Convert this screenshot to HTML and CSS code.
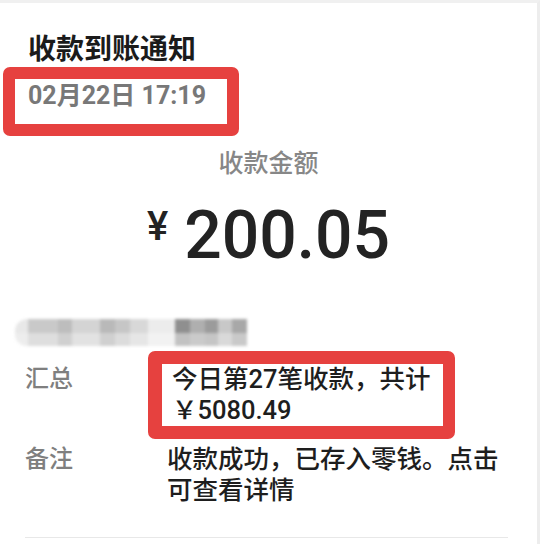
FILE: index.html
```html
<!DOCTYPE html>
<html lang="zh-CN">
<head>
    <meta charset="UTF-8">
    <meta name="viewport" content="width=device-width, initial-scale=1.0">
    <title>收款到账通知</title>
    <link rel="stylesheet" href="styles.css">
</head>
<body>

<div class="screen">
    <h1 class="title">收款到账通知</h1>
    <div class="mark date-box">02月22日 17:19</div>

    <div class="amount-label">收款金额</div>
    <div class="amount">
        <span class="currency">¥</span>
        <span class="value">200.05</span>
    </div>

    <!-- mosaic over the payer name -->
    <div class="mosaic">
        <div class="mosaic-top"></div>
        <div class="mosaic-bottom"></div>
    </div>

    <div class="details">
        <div class="label first">汇总</div>
        <div class="mark total-box">今日第27笔收款，共计<br>￥5080.49</div>

        <div class="label">备注</div>
        <div class="note">收款成功，已存入零钱。点击可查看详情</div>
    </div>
</div>

</body>
</html>
```

FILE: styles.css
```css
body {
    margin: 0;
    background: #fff;
    font-family: Roboto, "Noto Sans CJK SC", sans-serif;
    color: #1e1e1e;
}

.screen {
    width: 540px;
    height: 544px;
    box-sizing: border-box;
    border-top: 3px solid #f0f0f0;
    border-right: 3px solid #ededed;
    padding-top: 30px;
    overflow: hidden;
}

.title {
    margin: 0 0 0 28px;
    font-size: 28px;
    line-height: 34px;
    font-weight: 700;
    color: #1b1b1b;
}

.mark {
    border: 13px solid #e6413f;
    border-radius: 7px;
}

.date-box {
    width: 236px;
    box-sizing: border-box;
    margin-left: 3px;
    border-width: 12px;
    padding: 0 8px 12px 13px;
    font-size: 25px;
    line-height: 33px;
    font-weight: 700;
    color: #787878;
}

.amount-label {
    margin-top: 13px;
    text-align: center;
    font-size: 25px;
    line-height: 30px;
    font-weight: 500;
    color: #878787;
}

.amount {
    display: flex;
    justify-content: center;
    gap: 16px;
    margin-top: 24px;
    color: #232323;
    font-weight: 500;
}

.currency {
    margin-top: 4px;
    font-size: 40px;
    line-height: 40px;
}

.value {
    font-size: 66px;
    line-height: 66px;
}

.mosaic {
    width: 232px;
    margin: 50px 0 0 15px;
    border-radius: 12px 0 0 12px;
    overflow: hidden;
    filter: blur(1.5px);
}

.mosaic-top,
.mosaic-bottom {
    height: 14px;
}

.mosaic-top {
    background: linear-gradient(to right,
        #e8e8e8 0 13px, #c9c9c9 13px 43px, #bdbdbd 43px 57px,
        #d4d4d4 57px 85px, #b9b9b9 85px 100px, #c6c6c6 100px 115px,
        #d8d8d8 115px 133px, #ececec 133px 160px, #8f8f8f 160px 175px,
        #afafaf 175px 190px, #9b9b9b 190px 203px, #c8c8c8 203px 217px,
        #a8a8a8 217px 232px);
}

.mosaic-bottom {
    height: 13px;
    background: linear-gradient(to right,
        #ededed 0 13px, #dedede 13px 43px, #d0d0d0 43px 57px,
        #e2e2e2 57px 85px, #d0d0d0 85px 100px, #dcdcdc 100px 115px,
        #e6e6e6 115px 133px, #f2f2f2 133px 160px, #c2c2c2 160px 175px,
        #cacaca 175px 190px, #c5c5c5 190px 203px, #d9d9d9 203px 217px,
        #c9c9c9 217px 232px);
}

.details {
    display: grid;
    grid-template-columns: 142px 1fr;
    row-gap: 5px;
    margin: 5px 29px 0 25px;
    padding-bottom: 31px;
    border-bottom: 1px solid #e8e8e8;
    font-size: 25.5px;
    line-height: 31px;
}

.label {
    font-size: 24px;
    font-weight: 500;
    color: #7f7f7f;
}

.label.first {
    margin-top: 13px;
}

.total-box {
    justify-self: start;
    margin-left: -19px;
    border-left-width: 14px;
    border-right-width: 12px;
    padding: 0 12px 0 10px;
    font-weight: 500;
    color: #1e1e1e;
}

.note {
    font-weight: 500;
    color: #1e1e1e;
}
```
